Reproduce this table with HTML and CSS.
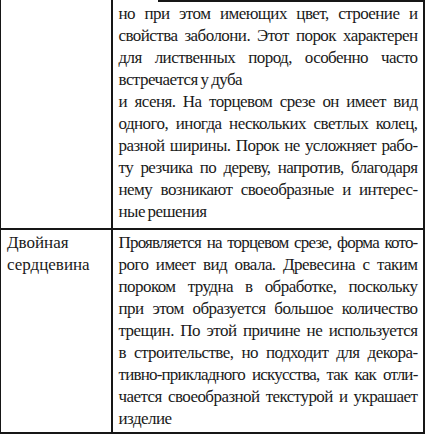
FILE: index.html
```html
<!DOCTYPE html>
<html lang="ru">
<head>
<meta charset="utf-8">
<link rel="stylesheet" href="styles.css">
</head>
<body>
<table class="defects">
  <colgroup><col class="c-name"><col class="c-desc"></colgroup>
  <tr class="row-first">
    <td class="name"></td>
    <td class="desc desc-first">
      <span class="ln">но при этом имеющих цвет, строение и</span>
      <span class="ln">свойства заболони. Этот порок характерен</span>
      <span class="ln">для лиственных пород, особенно часто</span>
      <span class="ln end">встречается у дуба</span>
      <span class="ln">и ясеня. На торцевом срезе он имеет вид</span>
      <span class="ln">одного, иногда нескольких светлых колец,</span>
      <span class="ln">разной ширины. Порок не усложняет рабо-</span>
      <span class="ln">ту резчика по дереву, напротив, благодаря</span>
      <span class="ln">нему возникают своеобразные и интерес-</span>
      <span class="ln end">ные решения</span>
    </td>
  </tr>
  <tr class="row-last">
    <td class="name">
      <span class="ln end">Двойная</span>
      <span class="ln end">сердцевина</span>
    </td>
    <td class="desc">
      <span class="ln tight">Проявляется на торцевом срезе, форма кото-</span>
      <span class="ln">рого имеет вид овала. Древесина с таким</span>
      <span class="ln">пороком трудна в обработке, поскольку</span>
      <span class="ln">при этом образуется большое количество</span>
      <span class="ln">трещин. По этой причине не используется</span>
      <span class="ln">в строительстве, но подходит для декора-</span>
      <span class="ln tight">тивно-прикладного искусства, так как отли-</span>
      <span class="ln">чается своеобразной текстурой и украшает</span>
      <span class="ln end">изделие</span>
    </td>
  </tr>
</table>
</body>
</html>
```
FILE: styles.css
```css
html, body {
  margin: 0;
  padding: 0;
  background: #ffffff;
}

body {
  font-family: "Liberation Serif", "Times New Roman", serif;
  font-size: 17px;
  line-height: 22px;
  color: #1a1a1a;
}

.defects {
  border-collapse: collapse;
  table-layout: fixed;
  width: 423px;
  margin: 0;
}

.c-name { width: 111px; }
.c-desc { width: 312px; }

.defects td {
  vertical-align: top;
  padding: 3px 5px 4px 6px;
  border: 2px solid #161616;
  overflow: hidden;
}

.row-first td {
  border-top: none;
}

.row-last td {
  padding-top: 2px;
  padding-bottom: 2px;
}

.defects td.name {
  border-left: 1px solid #161616;
}

.row-first .name {
  height: 221px;
}

.desc-first {
  background-image: linear-gradient(#161616, #161616);
  background-repeat: no-repeat;
  background-position: 45px 0;
  background-size: calc(100% - 45px) 2px;
}

.desc .ln {
  letter-spacing: -0.55px;
  word-spacing: -1px;
}

.desc .ln.tight {
  letter-spacing: -0.8px;
  word-spacing: -2px;
}

.ln {
  display: block;
  white-space: nowrap;
  text-align: justify;
  text-align-last: justify;
}

.ln.end {
  text-align-last: left;
}
```
